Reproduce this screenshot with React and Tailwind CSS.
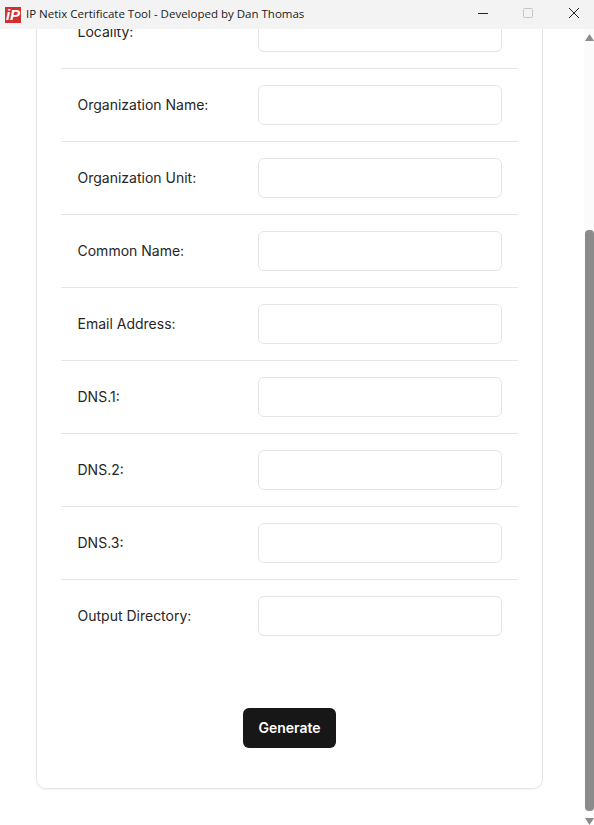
const fields = [
  "Locality:",
  "Organization Name:",
  "Organization Unit:",
  "Common Name:",
  "Email Address:",
  "DNS.1:",
  "DNS.2:",
  "DNS.3:",
  "Output Directory:",
]

function TitleBar() {
  return (
    <div className="flex h-[29px] shrink-0 items-center bg-[#f3f3f3] font-['Open_Sans',sans-serif] text-[11.5px] text-[#1a1a1a]">
      <div className="ml-[5px] flex h-[16px] w-[16px] items-center justify-center overflow-hidden bg-[#d03030] font-['Liberation_Sans',sans-serif] text-[15px] font-bold italic leading-none text-white">
        iP
      </div>
      <span className="ml-[5px] flex-1 whitespace-nowrap pb-[1px]">IP Netix Certificate Tool - Developed by Dan Thomas</span>
      <svg width="12" height="12" viewBox="0 0 12 12" className="mb-[1px] mr-[33px]" stroke="#222" fill="none">
        <path d="M1 5.5h10" />
      </svg>
      <svg width="12" height="12" viewBox="0 0 12 12" className="mb-[1px] mr-[34px]" stroke="#c4c4c4" fill="none">
        <rect x="1.5" y="0.5" width="9" height="9" rx="1" />
      </svg>
      <svg width="12" height="12" viewBox="0 0 12 12" className="mb-[1px] mr-[14px]" stroke="#222" fill="none">
        <path d="M1 0l10 10M11 0L1 10" />
      </svg>
    </div>
  )
}

function Scrollbar() {
  return (
    <div className="flex w-[10px] shrink-0 flex-col items-end bg-[#fbfbfb]">
      <svg width="9" height="7" viewBox="0 0 9 7" className="mt-[5px]" fill="#8b8b8b">
        <path d="M4.5 0L9 7H0z" />
      </svg>
      <div className="mt-[189px] h-[581px] w-[9px] rounded-[4px] bg-[#8b8b8b]" />
      <svg width="9" height="7" viewBox="0 0 9 7" className="mt-[7px]" fill="#8b8b8b">
        <path d="M0 0h9L4.5 7z" />
      </svg>
    </div>
  )
}

export default function App() {
  return (
    <div className="flex h-[825px] flex-col overflow-hidden bg-white font-['Inter',sans-serif]">
      <TitleBar />
      <div className="flex min-h-0 flex-1">
        <div className="min-w-0 flex-1 overflow-hidden pl-[36px] pr-[41px]">
          <div className="mt-[-34px] rounded-[10px] border border-[#e5e5e5] px-6 pb-10 shadow-xs">
            {fields.map((label, idx) => (
              <div
                key={label}
                className={`flex items-center px-4 py-4 ${idx < fields.length - 1 ? "border-b border-[#e5e5e5]" : ""}`}
              >
                <label className="mb-[2px] w-[181px] pl-[0.5px] text-[14px] text-[#262626]">{label}</label>
                <input className="h-10 w-[244px] rounded-md border border-[#e5e5e5] bg-white" />
              </div>
            ))}
            <div className="mt-14 flex justify-center">
              <button className="h-10 w-[93px] rounded-md bg-[#171717] pb-[1px] text-[14px] font-semibold text-white">
                Generate
              </button>
            </div>
          </div>
        </div>
        <Scrollbar />
      </div>
    </div>
  )
}
